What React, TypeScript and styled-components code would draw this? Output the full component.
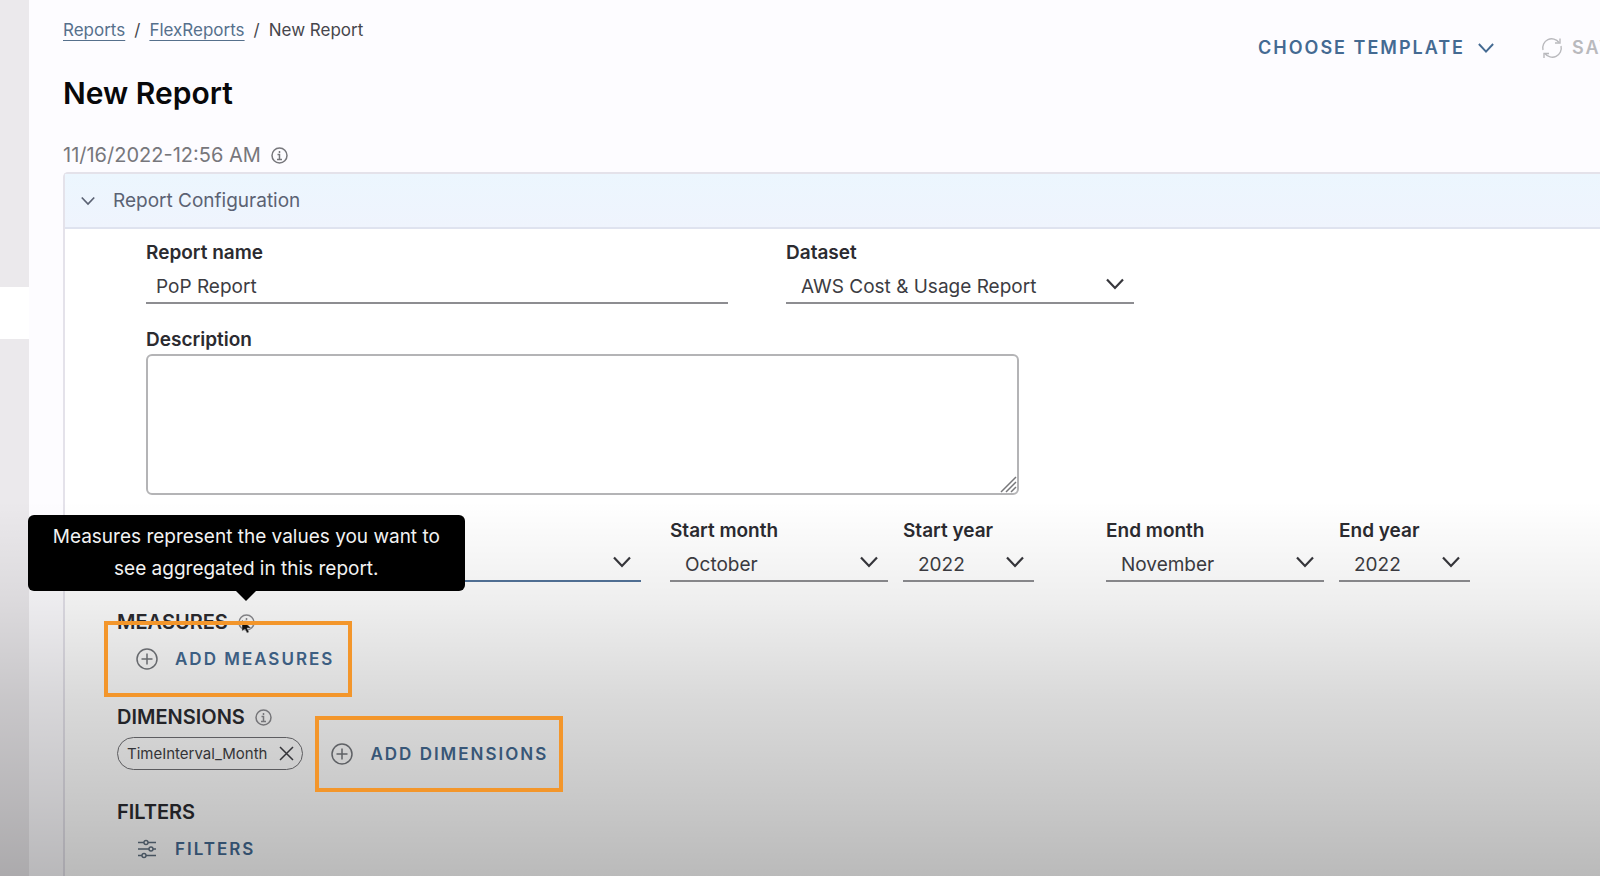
import React from "react";
import styled, { createGlobalStyle } from "styled-components";

const GlobalStyle = createGlobalStyle`
  *, *::before, *::after { box-sizing: border-box; }
  body {
    margin: 0;
    background: #fdfcff;
    color: #3c3c42;
    font-family: Inter, "Liberation Sans", sans-serif;
    font-size: 19px;
    line-height: 24px;
  }
  button, input, select, textarea { font: inherit; color: inherit; }
`;

const Page = styled.div`
  position: relative;
  display: flex;
  min-height: 100vh;
  overflow: hidden;
`;

const SideRail = styled.aside`
  display: flex;
  flex-direction: column;
  flex: 0 0 29px;
  padding-top: 287px;
  background: #ebe9ec;
`;

const RailSelection = styled.div`
  height: 52px;
  background: #ffffff;
`;

const Main = styled.main`
  display: flex;
  flex-direction: column;
  flex: 1;
  min-width: 0;
  padding: 18px 0 0 34px;
`;

const TopBar = styled.header`
  display: flex;
  justify-content: space-between;
`;

const Breadcrumb = styled.nav`
  display: flex;
  gap: 9px;
  font-size: 17px;
  color: #46464c;
`;

const Crumb = styled.a`
  color: #56708c;
  text-decoration: underline;
  text-decoration-thickness: 1px;
  text-underline-offset: 4px;
`;

const Title = styled.h1`
  margin: 33px 0 0;
  font-size: 30px;
  line-height: 36px;
  font-weight: 600;
  color: #08080a;
`;

const Actions = styled.div`
  display: flex;
  align-items: center;
  gap: 47px;
  height: 60px;
`;

const ActionButton = styled.button<{ $gap: number; $size: number }>`
  display: flex;
  align-items: center;
  gap: ${(p) => p.$gap}px;
  height: 33px;
  padding: 0;
  border: 0;
  background: none;
  font-size: ${(p) => p.$size}px;
  font-weight: 600;
  letter-spacing: 2px;
  white-space: nowrap;
  color: #446a92;
  cursor: pointer;

  svg { flex: none; }
`;

const SaveButton = styled(ActionButton)`
  justify-content: flex-start;
  width: 59px;
  overflow: hidden;
  color: #b9b9bd;
`;

const Timestamp = styled.div`
  display: flex;
  align-items: center;
  gap: 10px;
  margin-top: 32px;
  font-size: 20px;
  color: #77777c;
`;

const Card = styled.section`
  flex: 1;
  margin-top: 5px;
  border: 2px solid #e4e2ea;
  border-width: 2px 0 0 2px;
  border-top-left-radius: 5px;
  background: #ffffff;
`;

const CardHeader = styled.button`
  display: flex;
  align-items: center;
  gap: 18px;
  width: 100%;
  height: 55px;
  padding: 0 0 0 16px;
  border: 0;
  border-bottom: 2px solid #dfe3ef;
  background: linear-gradient(#ecf6fe, #eff4fd);
  color: #5b6273;
  text-align: left;
`;

const Form = styled.form`
  display: flex;
  flex-direction: column;
  gap: 28px;
  padding: 12px 0 12px 52px;
`;

const FieldRows = styled.div`
  display: flex;
  flex-direction: column;
  gap: 24px;
  padding-left: 29px;
`;

const FieldRow = styled.div`
  display: flex;
`;

const Field = styled.div<{ $width: number; $after?: number }>`
  display: flex;
  flex-direction: column;
  width: ${(p) => p.$width}px;
  margin-right: ${(p) => p.$after ?? 0}px;
`;

const Label = styled.label`
  height: 24px;
  font-size: 19px;
  font-weight: 600;
  color: #2b2b30;
`;

const TextInput = styled.input`
  height: 39px;
  padding: 5px 10px 0;
  border: 0;
  border-bottom: 2px solid #8d8d91;
  border-radius: 0;
  outline: 0;
  background: none;
`;

const SelectWrap = styled.div`
  position: relative;
  display: flex;
`;

const SelectInput = styled.select<{ $active?: boolean }>`
  appearance: none;
  width: 100%;
  height: 39px;
  padding: 6px 40px 0 15px;
  border: 0;
  border-bottom: 2px solid ${(p) => (p.$active ? "#53749a" : "#8d8d91")};
  border-radius: 0;
  outline: 0;
  background: none;
`;

const SelectArrow = styled.span`
  position: absolute;
  top: 10px;
  right: 10px;
  display: flex;
  color: #37373c;
  pointer-events: none;
`;

const TextAreaWrap = styled.div`
  position: relative;
  display: flex;
  margin-top: 2px;
`;

const TextArea = styled.textarea`
  width: 100%;
  height: 141px;
  padding: 8px 10px;
  border: 2px solid #b4b4b6;
  border-radius: 6px;
  outline: 0;
  resize: none;
  background: none;
`;

const Grip = styled.svg`
  position: absolute;
  right: 2px;
  bottom: 2px;
`;

const Sections = styled.div`
  display: flex;
  flex-direction: column;
  gap: 30px;
`;

const Section = styled.section`
  display: flex;
  flex-direction: column;
  gap: 8px;
`;

const SectionHeading = styled.div`
  display: flex;
  align-items: center;
  gap: 10px;
  color: #8c8c90;

  h2 {
    margin: 0;
    font-size: 20px;
    font-weight: 600;
    line-height: 24px;
    color: #2b2b30;
  }
`;

const SectionRow = styled.div<{ $indent?: boolean }>`
  display: flex;
  align-items: center;
  gap: 28px;
  padding-left: ${(p) => (p.$indent ? 19 : 0)}px;
`;

const InfoAnchor = styled.span`
  position: relative;
  display: flex;
`;

const Tooltip = styled.div`
  position: absolute;
  z-index: 3;
  bottom: 40px;
  left: -210px;
  width: 437px;
  padding: 6px 20px;
  border-radius: 6px;
  background: #000000;
  color: #f2f2f2;
  font-size: 19px;
  line-height: 32px;
  text-align: center;

  &::after {
    content: "";
    position: absolute;
    top: 100%;
    left: 50%;
    margin-left: -10px;
    border: 10px solid transparent;
    border-top-color: #000000;
    border-bottom: 0;
  }
`;

const Pointer = styled.svg`
  position: absolute;
  top: 5px;
  left: 3px;
`;

const Highlight = styled.div<{ $left: number }>`
  position: relative;

  &::after {
    content: "";
    position: absolute;
    z-index: 4;
    top: -21px;
    left: ${(p) => p.$left}px;
    width: 248px;
    height: 76px;
    border: 4px solid #f3962b;
    pointer-events: none;
  }
`;

const Chip = styled.span`
  display: flex;
  align-items: center;
  gap: 12px;
  height: 33px;
  padding: 0 8px 0 9px;
  border: 1px solid #717175;
  border-radius: 17px;
  font-size: 15px;
  color: #3f3f44;
`;

const ChipRemove = styled.button`
  display: flex;
  padding: 0;
  border: 0;
  background: none;
`;

const Shade = styled.div`
  position: absolute;
  z-index: 2;
  right: 0;
  bottom: 0;
  left: 0;
  height: 376px;
  background: linear-gradient(
    rgba(0, 0, 0, 0),
    rgba(0, 0, 0, 0.065) 27%,
    rgba(0, 0, 0, 0.15) 53%,
    rgba(0, 0, 0, 0.215) 80%,
    rgba(0, 0, 0, 0.27)
  );
  pointer-events: none;
`;

function Chevron({ width = 18 }: { width?: number }) {
  return (
    <svg width={width} height={width} viewBox="0 0 18 18" fill="none" stroke="currentColor" strokeWidth="2.200" aria-hidden="true">
      <path d="M1 4.500 9 13l8-8.500" />
    </svg>
  );
}

function InfoIcon() {
  return (
    <svg width="17" height="17" viewBox="0 0 17 17" fill="none" stroke="currentColor" strokeWidth="1.500" aria-hidden="true">
      <circle cx="8.500" cy="8.500" r="7.500" />
      <path d="M6.500 7.500h2v5M6 12.500h5M8.500 4v2" />
    </svg>
  );
}

function PlusCircle() {
  return (
    <svg width="22" height="22" viewBox="0 0 22 22" fill="none" stroke="#74777c" strokeWidth="1.500" aria-hidden="true">
      <circle cx="11" cy="11" r="10" />
      <path d="M11 5.500v11M5.500 11h11" />
    </svg>
  );
}

function SlidersIcon() {
  return (
    <svg width="22" height="22" viewBox="0 0 22 22" fill="none" stroke="#5f7080" strokeWidth="1.400" aria-hidden="true">
      <path d="M2 4.500h6M12 4.500h8M2 11h11M17 11h3M2 17.500h4M10 17.500h10" />
      <circle cx="10" cy="4.500" r="2" />
      <circle cx="15" cy="11" r="2" />
      <circle cx="8" cy="17.500" r="2" />
    </svg>
  );
}

function RefreshIcon() {
  return (
    <svg width="22" height="22" viewBox="0 0 22 22" fill="none" stroke="currentColor" strokeWidth="1.400" aria-hidden="true">
      <path d="M2 13a9 9 0 0 1 16-7.500M20 9A9 9 0 0 1 4 16.500" />
      <path d="M19 1.500v4.500h-5M3 21v-4.500h5" />
    </svg>
  );
}

type SelectProps = { id: string; value: string; active?: boolean; label?: string };

function Select({ id, value, active, label }: SelectProps) {
  return (
    <SelectWrap>
      <SelectInput id={id} $active={active} aria-label={label} defaultValue={value}>
        <option value={value}>{value}</option>
      </SelectInput>
      <SelectArrow>
        <Chevron />
      </SelectArrow>
    </SelectWrap>
  );
}

const periodFields = [
  { id: "start-month", label: "Start month", value: "October", width: 218, after: 15 },
  { id: "start-year", label: "Start year", value: "2022", width: 131, after: 72 },
  { id: "end-month", label: "End month", value: "November", width: 218, after: 15 },
  { id: "end-year", label: "End year", value: "2022", width: 131, after: 0 },
];

export default function App() {
  return (
    <>
      <GlobalStyle />
      <Page>
        <SideRail>
          <RailSelection />
        </SideRail>
        <Main>
          <TopBar>
            <div>
              <Breadcrumb aria-label="Breadcrumb">
                <Crumb href="#reports">Reports</Crumb>
                <span>/</span>
                <Crumb href="#flexreports">FlexReports</Crumb>
                <span>/</span>
                <span>New Report</span>
              </Breadcrumb>
              <Title>New Report</Title>
            </div>
            <Actions>
              <ActionButton type="button" $gap={13} $size={18}>
                CHOOSE TEMPLATE
                <Chevron width={16} />
              </ActionButton>
              <SaveButton type="button" $gap={9} $size={18} disabled>
                <RefreshIcon />
                SAVE
              </SaveButton>
            </Actions>
          </TopBar>
          <Timestamp>
            11/16/2022-12:56 AM
            <InfoIcon />
          </Timestamp>
          <Card>
            <CardHeader type="button" aria-expanded="true">
              <Chevron width={14} />
              Report Configuration
            </CardHeader>
            <Form>
              <FieldRows>
                <FieldRow>
                  <Field $width={582} $after={58}>
                    <Label htmlFor="report-name">Report name</Label>
                    <TextInput id="report-name" defaultValue="PoP Report" />
                  </Field>
                  <Field $width={348}>
                    <Label htmlFor="dataset">Dataset</Label>
                    <Select id="dataset" value="AWS Cost &amp; Usage Report" />
                  </Field>
                </FieldRow>
                <Field $width={873}>
                  <Label htmlFor="description">Description</Label>
                  <TextAreaWrap>
                    <TextArea id="description" />
                    <Grip width="17" height="17" viewBox="0 0 17 17" stroke="#77777a" strokeWidth="1.500" aria-hidden="true">
                      <path d="M1 16 16 1M6 16 16 6M11 16l5-5" />
                    </Grip>
                  </TextAreaWrap>
                </Field>
                <FieldRow>
                  <Field $width={495} $after={29}>
                    <Label as="span" />
                    <Select id="interval" value="" label="Interval" active />
                  </Field>
                  {periodFields.map((f) => (
                    <Field key={f.id} $width={f.width} $after={f.after}>
                      <Label htmlFor={f.id}>{f.label}</Label>
                      <Select id={f.id} value={f.value} />
                    </Field>
                  ))}
                </FieldRow>
              </FieldRows>

              <Sections>
                <Section>
                  <SectionHeading>
                    <h2>MEASURES</h2>
                    <InfoAnchor>
                      <InfoIcon />
                      <Tooltip role="tooltip">
                        Measures represent the values you want to see aggregated in this report.
                      </Tooltip>
                      <Pointer width="11" height="16" viewBox="0 0 11 16" aria-hidden="true">
                        <path d="M1 1v11l3-2 2 4 2-1-2-4h4z" fill="#111" stroke="#ccc" strokeWidth="0.500" />
                      </Pointer>
                    </InfoAnchor>
                  </SectionHeading>
                  <SectionRow $indent>
                    <Highlight $left={-32}>
                      <ActionButton type="button" $gap={17} $size={17}>
                        <PlusCircle />
                        ADD MEASURES
                      </ActionButton>
                    </Highlight>
                  </SectionRow>
                </Section>

                <Section>
                  <SectionHeading>
                    <h2>DIMENSIONS</h2>
                    <InfoIcon />
                  </SectionHeading>
                  <SectionRow>
                    <Chip>
                      TimeInterval_Month
                      <ChipRemove type="button" aria-label="Remove TimeInterval_Month">
                        <svg width="15" height="15" viewBox="0 0 15 15" stroke="#3f3f44" strokeWidth="1.500" aria-hidden="true">
                          <path d="m1 1 13 13M14 1 1 14" />
                        </svg>
                      </ChipRemove>
                    </Chip>
                    <Highlight $left={-16}>
                      <ActionButton type="button" $gap={17} $size={17}>
                        <PlusCircle />
                        ADD DIMENSIONS
                      </ActionButton>
                    </Highlight>
                  </SectionRow>
                </Section>

                <Section>
                  <SectionHeading>
                    <h2>FILTERS</h2>
                  </SectionHeading>
                  <SectionRow $indent>
                    <ActionButton type="button" $gap={17} $size={17}>
                      <SlidersIcon />
                      FILTERS
                    </ActionButton>
                  </SectionRow>
                </Section>
              </Sections>
            </Form>
          </Card>
        </Main>
        <Shade />
      </Page>
    </>
  );
}
